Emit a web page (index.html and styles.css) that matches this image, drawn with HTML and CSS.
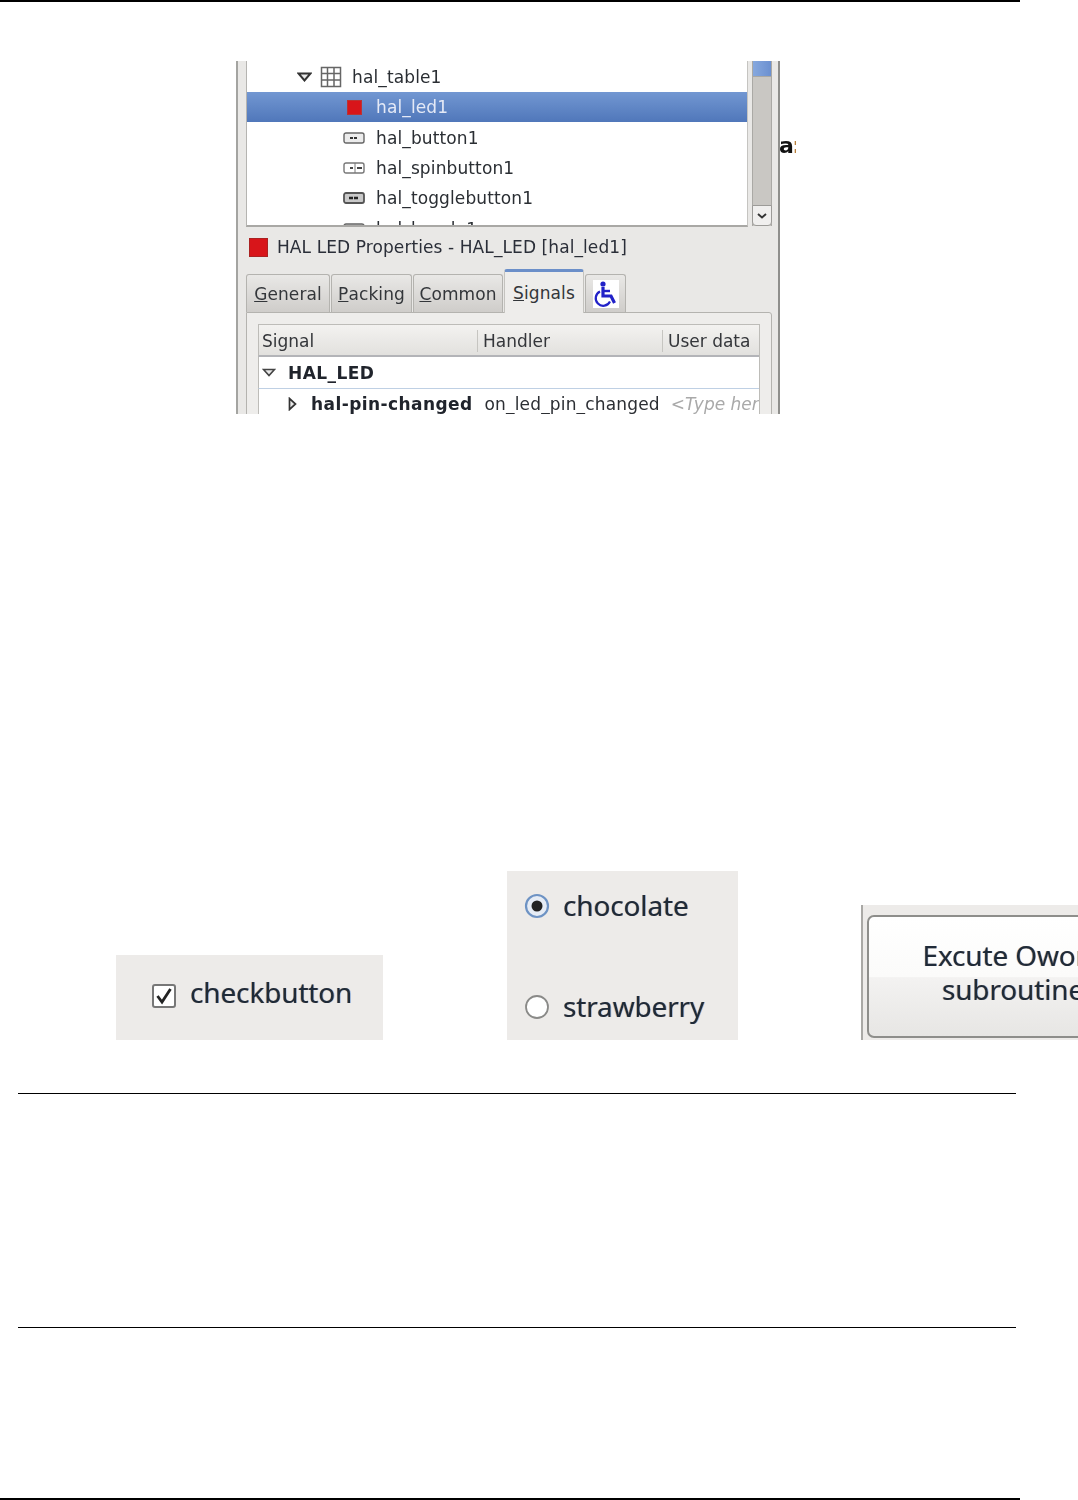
FILE: index.html
```html
<!DOCTYPE html>
<html lang="en">
<head>
<meta charset="utf-8">
<title>HAL widgets</title>
<link rel="stylesheet" href="styles.css">
</head>
<body>
<div class="page">
  <hr class="rule rule-edge rule-top">
  <div class="shot-row">
    <div class="window">
      <div class="tree-area">
        <div class="tree">
          <div class="row row-parent">
            <svg class="expander" width="15" height="10" viewBox="0 0 15 10"><path d="M1.5 1.5h12L7.5 8.5z" fill="#e8e8e8" stroke="#333" stroke-width="2"/></svg>
            <svg class="grid-icon" width="22" height="22" viewBox="0 0 22 22"><path d="M1.5 1.5h19v19h-19zM1.5 7.5h19M1.5 14h19M7.5 1.5v19M14 1.5v19" fill="#fff" stroke="#666" stroke-width="1.5"/></svg>
            <span>hal_table1</span>
          </div>
          <div class="row row-child row-selected">
            <span class="led led-small"></span>
            <span>hal_led1</span>
          </div>
          <div class="row row-child">
            <svg class="wicon" width="22" height="12" viewBox="0 0 22 12"><rect x="1" y="1" width="20" height="10" rx="2" fill="#ececec" stroke="#666" stroke-width="1.4"/><path d="M7 6h8" stroke="#333" stroke-width="2" stroke-dasharray="3 1"/></svg>
            <span>hal_button1</span>
          </div>
          <div class="row row-child">
            <svg class="wicon" width="22" height="12" viewBox="0 0 22 12"><rect x="1" y="1" width="20" height="10" rx="2" fill="#fff" stroke="#777" stroke-width="1.4"/><path d="M12 1v10" stroke="#777"/><path d="M7 6h3M14 6h5" stroke="#444" stroke-width="2"/></svg>
            <span>hal_spinbutton1</span>
          </div>
          <div class="row row-child">
            <svg class="wicon" width="22" height="12" viewBox="0 0 22 12"><rect x="1" y="1" width="20" height="10" rx="2" fill="#c9c9c9" stroke="#555" stroke-width="1.8"/><path d="M6 6h10" stroke="#222" stroke-width="2.4" stroke-dasharray="4 1"/></svg>
            <span>hal_togglebutton1</span>
          </div>
          <div class="row row-child">
            <svg class="wicon" width="22" height="12" viewBox="0 0 22 12"><rect x="1" y="1" width="20" height="10" rx="2" fill="#ddd" stroke="#666" stroke-width="1.4"/></svg>
            <span>hal_hscale1</span>
          </div>
        </div>
        <div class="scrollbar">
          <div class="thumb"></div>
          <div class="trough"></div>
          <div class="scroll-btn">
            <svg width="10" height="6" viewBox="0 0 10 6"><path d="M1 1l4 3.5L9 1" fill="none" stroke="#333" stroke-width="1.9"/></svg>
          </div>
        </div>
      </div>
      <div class="prop-title">
        <span class="led led-large"></span>
        <span class="prop-text">HAL LED Properties - HAL_LED [hal_led1]</span>
      </div>
      <div class="tabs">
        <div class="tab tab-general"><u>G</u>eneral</div>
        <div class="tab tab-packing"><u>P</u>acking</div>
        <div class="tab tab-common"><u>C</u>ommon</div>
        <div class="tab tab-active"><u>S</u>ignals</div>
        <div class="tab tab-a11y">
          <svg width="26" height="28" viewBox="0 0 26 28"><rect width="26" height="28" fill="#fff"/><circle cx="10" cy="4" r="2.6" fill="#2222c8"/><path d="M10 7v9h8l3.5 7" fill="none" stroke="#2222c8" stroke-width="3.2"/><path d="M10 11h7" stroke="#2222c8" stroke-width="2.4"/><path d="M7 11.5a7.5 7.5 0 1 0 10 10" fill="none" stroke="#2222c8" stroke-width="2.2"/></svg>
        </div>
      </div>
      <div class="panel">
        <div class="sig-table">
          <div class="sig-head">
            <div class="col col-signal">Signal</div>
            <div class="col col-handler">Handler</div>
            <div class="col col-user">User data</div>
          </div>
          <div class="sig-row sig-group">
            <svg class="arrow" width="14" height="9" viewBox="0 0 14 9"><path d="M1.5 1.5h11L7 7.5z" fill="#e8e8e8" stroke="#444" stroke-width="1.7"/></svg>
            <b>HAL_LED</b>
          </div>
          <div class="sig-row sig-item">
            <svg class="arrow" width="9" height="14" viewBox="0 0 9 14"><path d="M1.5 1.5v11L7.5 7z" fill="#e8e8e8" stroke="#333" stroke-width="1.7"/></svg>
            <b>hal-pin-changed</b>
            <span class="handler">on_led_pin_changed</span>
            <i class="hint">&lt;Type here&gt;</i>
          </div>
        </div>
      </div>
    </div>
    <div class="behind">a<span class="behind-colon">:</span></div>
  </div>
  <div class="samples">
    <div class="sample sample-check">
      <svg class="checkbox" width="26" height="26" viewBox="0 0 26 26"><rect x="2" y="2" width="22" height="22" rx="2" fill="#fff" stroke="#777" stroke-width="2"/><path d="M6.5 13l4.5 6L19.5 6" fill="none" stroke="#222" stroke-width="2.8"/></svg>
      <span class="big">checkbutton</span>
    </div>
    <div class="sample sample-radio">
      <div class="radio-line">
        <svg width="26" height="26" viewBox="0 0 26 26"><circle cx="13" cy="13" r="11" fill="#e6ecf5" stroke="#6e93c4" stroke-width="2.2"/><circle cx="13" cy="13" r="5.5" fill="#222"/></svg>
        <span class="big">chocolate</span>
      </div>
      <div class="radio-line">
        <svg width="26" height="26" viewBox="0 0 26 26"><circle cx="13" cy="13" r="11" fill="#fff" stroke="#8a8a88" stroke-width="1.8"/></svg>
        <span class="big">strawberry</span>
      </div>
    </div>
    <div class="sample sample-button">
      <div class="gtk-button"><span class="big">Excute Oword<br>subroutine</span></div>
    </div>
  </div>
  <hr class="rule rule-mid-a">
  <hr class="rule rule-mid-b">
  <hr class="rule rule-edge rule-bottom">
</div>
</body>
</html>
```
FILE: styles.css
```css
html, body { margin: 0; padding: 0; background: #fff; overflow: hidden; }
.page { width: 1078px; height: 1500px; overflow: hidden; font-family: "DejaVu Sans", sans-serif; color: #222; }

.rule { border: 0; background: #000; height: 1px; margin: 0; }
.rule-edge { width: 1020px; height: 2px; }
.rule-top { margin-bottom: 59px; }
.rule-mid-a { width: 998px; margin: 53px 0 0 18px; }
.rule-mid-b { width: 998px; margin: 233px 0 0 18px; }
.rule-bottom { margin-top: 170px; }

.shot-row { display: flex; margin-left: 236px; height: 353px; filter: blur(0.7px); }
.behind { font-size: 22px; font-weight: 700; line-height: 26px; letter-spacing: -1.5px; margin: 72px 0 0 -1px; color: #111; width: 17px; overflow: hidden; white-space: nowrap; }
.behind-colon { color: #b9803c; }

.window { width: 524px; height: 353px; overflow: hidden; background: #e9e8e6; border-left: 2px solid #a4a4a1; border-right: 2px solid #8f8f8c; padding: 0 8px; flex: none; position: relative; z-index: 1; }

.tree-area { display: flex; height: 165px; }
.tree { width: 502px; height: 166px; flex: none; background: #fff; overflow: hidden; border-left: 1px solid #b5b4b1; border-right: 1px solid #c5c4c1; border-bottom: 2px solid #a9a8a5; box-sizing: border-box; font-size: 17px; letter-spacing: 0.12px; }
.row { height: 30.4px; display: flex; align-items: center; white-space: nowrap; color: #2a2e33; }
.row-parent { height: 31px; padding-left: 50px; }
.row-parent .expander { margin-right: 8px; }
.row-parent .grid-icon { margin-right: 10px; }
.row-child { padding-left: 96px; }
.row-child .wicon { margin-right: 11px; }
.row-selected { background: linear-gradient(#7297d2, #5077ba); color: #e4e9f6; }
.led { background: #d8151a; display: block; flex: none; }
.led-small { width: 15px; height: 15px; margin: 0 14px 0 4px; border: 1px solid #b33; box-sizing: border-box; }
.led-large { width: 19px; height: 19px; border: 1px solid #a22; box-sizing: border-box; margin-right: 9px; }

.scrollbar { width: 20px; margin-left: 4px; height: 165px; display: flex; flex-direction: column; flex: none; background: #c9c7c3; border-left: 1px solid #aaa9a5; border-right: 1px solid #aaa9a5; box-sizing: border-box; }
.thumb { height: 15px; background: linear-gradient(90deg, #86a8de, #6b90d0); flex: none; }
.trough { flex: 1; border-top: 1px solid #a9a8a4; }
.scroll-btn { height: 19px; flex: none; background: #f0efee; border: 1px solid #9c9b98; border-radius: 0 0 4px 4px; margin: 0 -1px; display: flex; align-items: center; justify-content: center; }

.prop-title { display: flex; align-items: center; height: 19px; margin: 12px 0 0 3px; font-size: 17px; letter-spacing: 0.09px; color: #2a2e38; white-space: nowrap; }
.prop-text { margin-bottom: 2px; }

.tabs { display: flex; align-items: flex-end; height: 43px; margin-top: 12px; font-size: 17px; letter-spacing: 0.1px; }
.tab { height: 38px; box-sizing: border-box; display: flex; align-items: center; justify-content: center; background: linear-gradient(#e9e8e6, #cfcdca); border: 1px solid #b4b3af; border-bottom: 0; border-radius: 3px 3px 0 0; color: #33363a; margin-right: 1px; white-space: nowrap; }
.tab-general { width: 84px; }
.tab-packing { width: 81px; }
.tab-common { width: 90px; }
.tab-active { width: 80px; height: 44px; background: #eeedeb; border: 1px solid #c4c3bf; border-top: 3px solid #6b8fc9; border-bottom: 0; margin-bottom: -1px; position: relative; }
.tab-a11y { width: 41px; }

.panel { height: 110px; width: 526px; box-sizing: border-box; border: 1px solid #b4b3af; border-radius: 0 3px 0 0; padding: 11px 11px 0; background: #eeedeb; }
.sig-table { width: 502px; height: 100px; background: #fff; overflow: hidden; white-space: nowrap; font-size: 17px; border-right: 1px solid #bdbcb8; box-sizing: border-box; }
.sig-head { display: flex; height: 33px; box-sizing: border-box; background: linear-gradient(#f3f2f0, #e2e1de); border-top: 1px solid #bdbcb8; border-bottom: 2px solid #b3b4b8; border-left: 1px solid #bdbcb8; color: #34363a; }
.col { display: flex; align-items: center; padding-left: 3px; box-sizing: border-box; height: 22px; margin-top: 5px; border-right: 1px solid #c6c5c1; }
.col-signal { width: 219px; }
.col-handler { width: 185px; padding-left: 5px; }
.col-user { width: 96px; padding-left: 5px; border-right: 0; }
.sig-row { display: flex; align-items: center; height: 30px; border-left: 1px solid #bdbcb8; font-size: 17px; }
.sig-row b { color: #20242c; font-weight: 700; }
.arrow { flex: none; }
.sig-group { padding-left: 3px; border-bottom: 1px solid #bfd0e4; height: 31px; }
.sig-group b { margin-left: 12px; letter-spacing: 0.45px; }
.sig-item { padding-left: 29px; }
.sig-item b { margin-left: 14px; letter-spacing: 0.42px; flex: none; }
.handler { margin-left: 12px; letter-spacing: 0.16px; color: #2b2e33; flex: none; }
.hint { margin-left: 11px; color: #a9a9a9; flex: none; }

.samples { display: flex; align-items: flex-end; height: 169px; margin-top: 457px; padding-left: 116px; filter: blur(0.5px); }
.sample { background: #edebe9; flex: none; box-sizing: border-box; }
.big { font-family: "Noto Sans", sans-serif; font-size: 28px; letter-spacing: -0.15px; color: #1f2a38; text-shadow: -0.6px 0 rgba(190, 110, 30, 0.45), 0.6px 0 rgba(40, 110, 210, 0.45); }
.sample-check { width: 267px; height: 85px; display: flex; align-items: center; padding: 0 0 4px 35px; gap: 13px; }
.sample-check .big { margin-bottom: 8px; }
.sample-radio { width: 231px; height: 169px; margin-left: 124px; padding: 16px 0 14px 17px; display: flex; flex-direction: column; justify-content: space-between; }
.radio-line { display: flex; align-items: center; gap: 13px; height: 38px; }
.radio-line .big { margin-bottom: 3px; }
.sample-button { width: 310px; height: 135px; margin-left: 123px; padding: 10px 0 2px 4px; border-left: 2px solid #a9a8a5; }
.gtk-button { width: 292px; height: 123px; box-sizing: border-box; border: 2px solid #8e8e8b; border-radius: 7px; padding-bottom: 10px; background: linear-gradient(#fff 0, #fbfbfa 50%, #f3f2f1 51%, #e7e6e4 100%); display: flex; align-items: center; justify-content: center; text-align: center; line-height: 34px; }
```
